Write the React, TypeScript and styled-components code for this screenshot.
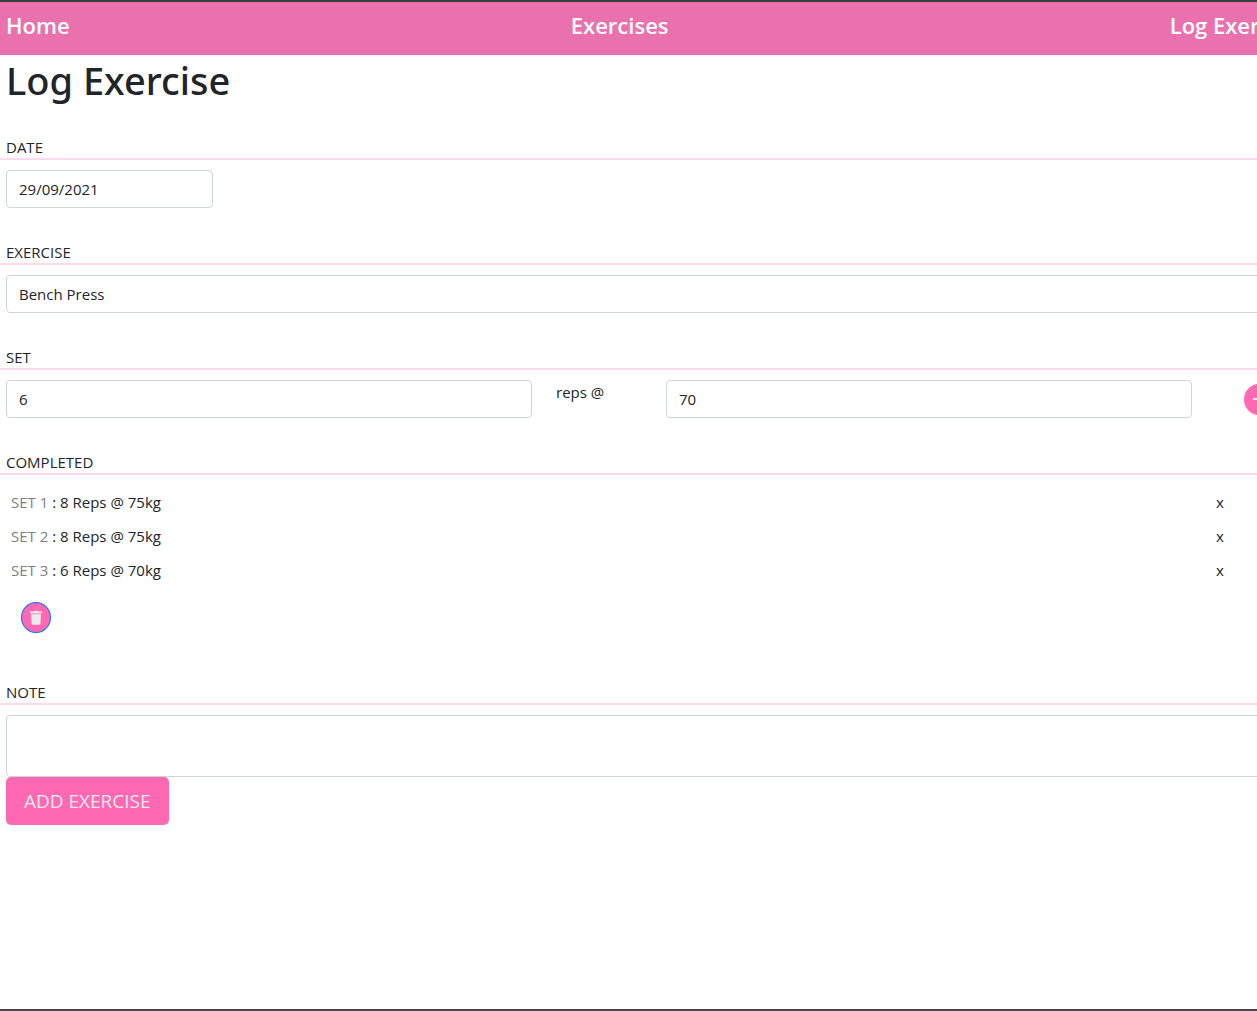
import React, { useState } from "react";
import styled, { createGlobalStyle } from "styled-components";

const GlobalStyle = createGlobalStyle`
  *, *::before, *::after { box-sizing: border-box; }
  body {
    margin: 0;
    overflow-x: hidden;
    background: #fff;
    color: #212529;
    font-family: "Segoe UI", "Open Sans", "Noto Sans", sans-serif;
    font-size: 15px;
    line-height: 24px;
  }
`;

const Frame = styled.div`
  min-height: 100vh;
  overflow: hidden;
  border-top: 2px solid #3c3c3f;
  border-bottom: 2px solid #454547;
`;

const Page = styled.div`
  width: calc(100% + 51px);
`;

const Nav = styled.nav`
  display: flex;
  justify-content: space-between;
  height: 53px;
  padding: 5px 8px 0 6px;
  background: #e971ad;
`;

const NavLink = styled.a`
  color: #fff;
  font-size: 22px;
  font-weight: 600;
  line-height: 36px;
  text-decoration: none;
`;

const Title = styled.h1`
  margin: 0;
  padding: 1px 6px;
  font-family: "Segoe UI", "Noto Sans", sans-serif;
  font-size: 38px;
  font-weight: 500;
  line-height: 48px;
`;

const Section = styled.section<{ $gap?: number }>`
  padding-top: ${(p) => p.$gap ?? 32}px;
`;

const SectionLabel = styled.label`
  display: block;
  height: 25px;
  padding: 0 6px;
  border-bottom: 2px solid #ffd9ec;
  line-height: 24px;
  text-transform: uppercase;
`;

const Body = styled.div`
  display: flex;
  flex-direction: column;
  align-items: flex-start;
  padding: 10px 6px 0;
`;

const Field = styled.input<{ $width?: string }>`
  width: ${(p) => p.$width ?? "100%"};
  height: 38px;
  padding: 6px 12px;
  border: 1px solid #ced4da;
  border-radius: 4px;
  background: #fff;
  color: inherit;
  font: inherit;
`;

const Picker = styled(Field).attrs({ as: "select" })`
  appearance: none;
`;

const Note = styled.textarea`
  display: block;
  width: 100%;
  height: 62px;
  padding: 6px 12px;
  border: 1px solid #ced4da;
  border-radius: 4px;
  color: inherit;
  font: inherit;
  resize: none;
`;

const Grid = styled.div`
  display: grid;
  width: 100%;
  grid-template-columns: repeat(12, minmax(0, 1fr));
  column-gap: 24px;
`;

const Cell = styled.div<{ $span: number; $center?: boolean }>`
  display: flex;
  grid-column: span ${(p) => p.$span};
  align-items: ${(p) => (p.$center ? "center" : "flex-start")};
  justify-content: ${(p) => (p.$center ? "center" : "flex-start")};
`;

const RoundButton = styled.button<{ $outlined?: boolean }>`
  display: flex;
  align-items: center;
  justify-content: center;
  width: 30px;
  height: 31px;
  padding: 0;
  border: 1px solid ${(p) => (p.$outlined ? "#0d6efd" : "#ff69b4")};
  border-radius: 50%;
  background: #ff69b4;
  color: #ebebeb;
  cursor: pointer;
`;

const SetList = styled.ul`
  width: 100%;
  margin: 0;
  padding: 0;
  list-style: none;
`;

const SetRow = styled.li`
  padding: 5px 0;
`;

const SetText = styled.span`
  padding-left: 5px;
`;

const SetName = styled.span`
  color: #808080;
`;

const RemoveButton = styled.button`
  padding: 0;
  border: 0;
  background: none;
  color: inherit;
  font: inherit;
  cursor: pointer;
`;

const ClearArea = styled.div`
  padding: 15px;
`;

const AddButton = styled.button`
  height: 48px;
  padding: 0 18px;
  border: 0;
  border-radius: 5px;
  background: #ff69b4;
  color: #ebebeb;
  font: inherit;
  font-size: 19px;
  line-height: 30px;
  cursor: pointer;
`;

const TrashIcon = () => (
  <svg width="14" height="16" viewBox="0 0 14 16" fill="currentColor" aria-hidden="true">
    <path d="M1 1.5h3.5L5 .8h4l.5.7H13v1.6H1z" />
    <path d="M1.7 3.1h10.6v1.2H1.7z" opacity=".5" />
    <path d="M2 4.3h10l-.6 9.4a1.2 1.2 0 0 1-1.2 1.1H3.8a1.2 1.2 0 0 1-1.2-1.1z" />
  </svg>
);

const PlusIcon = () => (
  <svg width="12" height="12" viewBox="0 0 12 12" fill="currentColor" aria-hidden="true">
    <path d="M5 0h2v5h5v2H7v5H5V7H0V5h5z" />
  </svg>
);

type WorkSet = { reps: string; weight: string };

export default function App() {
  const [date, setDate] = useState("29/09/2021");
  const [reps, setReps] = useState("6");
  const [weight, setWeight] = useState("70");
  const [note, setNote] = useState("");
  const [sets, setSets] = useState<WorkSet[]>([
    { reps: "8", weight: "75" },
    { reps: "8", weight: "75" },
    { reps: "6", weight: "70" },
  ]);

  return (
    <Frame>
      <GlobalStyle />
      <Page>
        <Nav>
          <NavLink href="#home">Home</NavLink>
          <NavLink href="#exercises">Exercises</NavLink>
          <NavLink href="#log">Log Exercise</NavLink>
        </Nav>
        <Title>Log Exercise</Title>

        <Section $gap={30}>
          <SectionLabel htmlFor="date">Date</SectionLabel>
          <Body>
            <Field id="date" $width="207px" value={date} onChange={(e) => setDate(e.target.value)} />
          </Body>
        </Section>

        <Section>
          <SectionLabel htmlFor="exercise">Exercise</SectionLabel>
          <Body>
            <Picker id="exercise">
              <option>Bench Press</option>
            </Picker>
          </Body>
        </Section>

        <Section>
          <SectionLabel htmlFor="reps">Set</SectionLabel>
          <Body>
            <Grid>
              <Cell $span={5}>
                <Field id="reps" value={reps} onChange={(e) => setReps(e.target.value)} />
              </Cell>
              <Cell $span={1}>
                <label htmlFor="weight">reps @</label>
              </Cell>
              <Cell $span={5}>
                <Field id="weight" value={weight} onChange={(e) => setWeight(e.target.value)} />
              </Cell>
              <Cell $span={1} $center>
                <RoundButton aria-label="Add set" onClick={() => setSets([...sets, { reps, weight }])}>
                  <PlusIcon />
                </RoundButton>
              </Cell>
            </Grid>
          </Body>
        </Section>

        <Section>
          <SectionLabel as="div">Completed</SectionLabel>
          <Body>
            <SetList>
              {sets.map((s, i) => (
                <SetRow key={i}>
                  <Grid>
                    <Cell $span={11}>
                      <SetText>
                        <SetName>SET {i + 1}</SetName> : {s.reps} Reps @ {s.weight}kg
                      </SetText>
                    </Cell>
                    <Cell $span={1}>
                      <RemoveButton
                        aria-label={`Remove set ${i + 1}`}
                        onClick={() => setSets(sets.filter((_, n) => n !== i))}
                      >
                        x
                      </RemoveButton>
                    </Cell>
                  </Grid>
                </SetRow>
              ))}
            </SetList>
            <ClearArea>
              <RoundButton $outlined aria-label="Clear sets" onClick={() => setSets([])}>
                <TrashIcon />
              </RoundButton>
            </ClearArea>
          </Body>
        </Section>

        <Section>
          <SectionLabel htmlFor="note">Note</SectionLabel>
          <Body>
            <Note id="note" value={note} onChange={(e) => setNote(e.target.value)} />
            <AddButton>ADD EXERCISE</AddButton>
          </Body>
        </Section>
      </Page>
    </Frame>
  );
}
